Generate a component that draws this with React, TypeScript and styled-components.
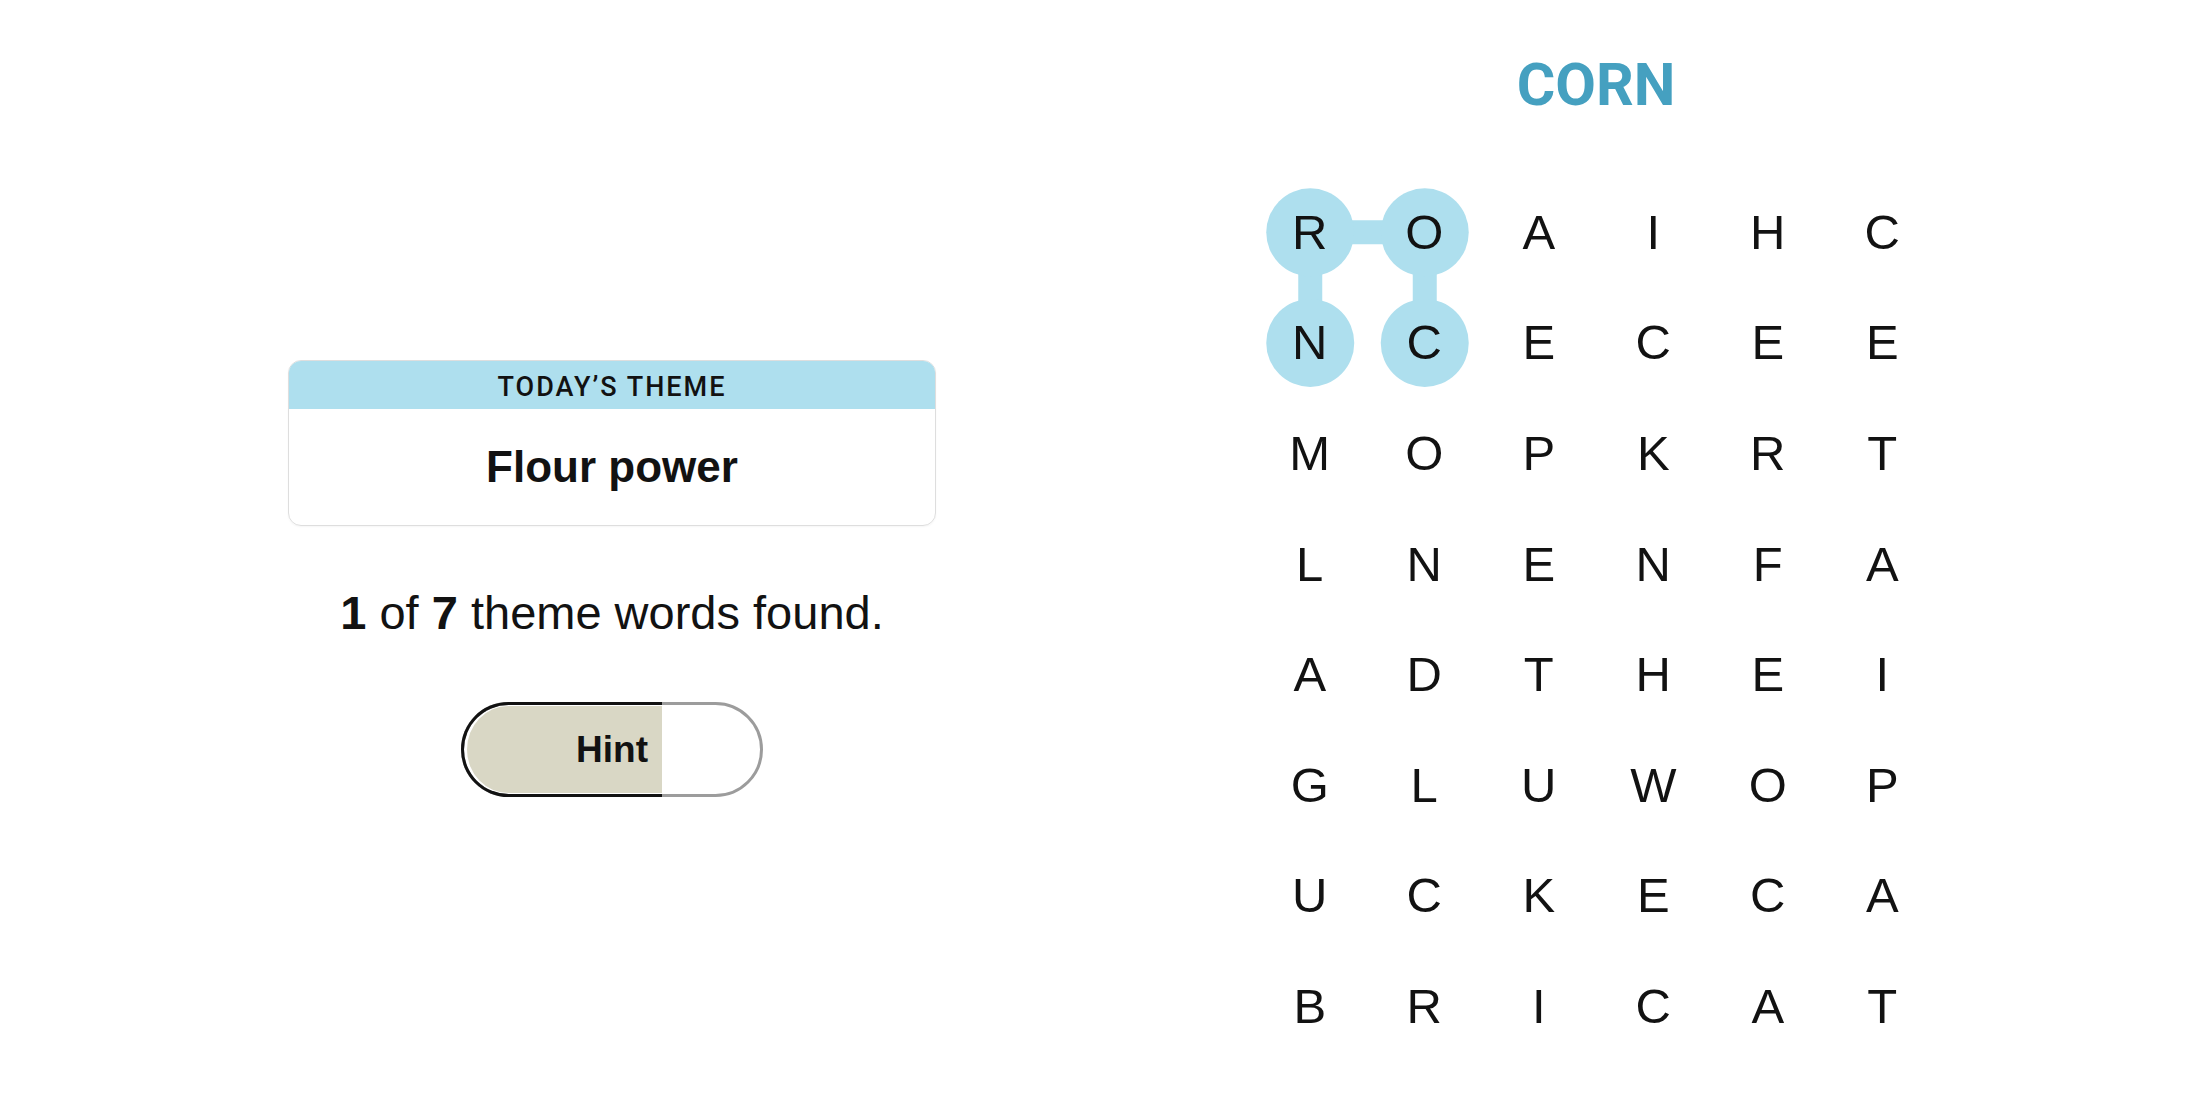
import styled, { createGlobalStyle } from "styled-components";

const GlobalStyle = createGlobalStyle`
  html, body {
    margin: 0;
    padding: 0;
    background: #ffffff;
  }
  body {
    font-family: "Liberation Sans", Arial, sans-serif;
    color: #121212;
  }
  * {
    box-sizing: border-box;
  }
`;

const CELL_W = 114.5;
const CELL_H = 110.6;
const DOT = "#aedfee";

const LETTERS = [
  "ROAIHC",
  "NCECEE",
  "MOPKRT",
  "LNENFA",
  "ADTHEI",
  "GLUWOP",
  "UCKECA",
  "BRICAT",
];

// found word path, as [row, col]
const PATH: [number, number][] = [
  [1, 1],
  [0, 1],
  [0, 0],
  [1, 0],
];

const Page = styled.main`
  display: flex;
  width: 2200px;
  height: 1100px;
  overflow: hidden;
`;

const LeftPanel = styled.section`
  width: 1224px;
  display: flex;
  flex-direction: column;
  align-items: center;
  padding-top: 360px;
`;

const RightPanel = styled.section`
  width: 744px;
  display: flex;
  flex-direction: column;
  align-items: center;
  padding-top: 55px;
`;

const ThemeCard = styled.div`
  width: 648px;
  border: 1px solid #dedede;
  border-radius: 13px;
  overflow: hidden;
  box-shadow: 0 1px 2px rgba(0, 0, 0, 0.04);
`;

const ThemeHeader = styled.div`
  height: 48px;
  display: flex;
  align-items: center;
  justify-content: center;
  background: ${DOT};
  font-family: Roboto, "Liberation Sans", sans-serif;
  font-size: 27px;
  font-weight: 500;
  line-height: 1;
  letter-spacing: 2px;
  padding-top: 4px;
`;

const ThemeBody = styled.div`
  height: 116px;
  display: flex;
  align-items: center;
  justify-content: center;
  font-size: 44px;
  font-weight: 700;
  line-height: 1;
`;

const Progress = styled.p`
  margin: 63px 0 0;
  font-size: 47px;
  line-height: 1;
  b {
    font-weight: 700;
  }
`;

const HintButton = styled.button`
  position: relative;
  margin-top: 66px;
  width: 302px;
  height: 95px;
  border: 3px solid #9c9c9c;
  border-radius: 48px;
  background: #ffffff;
  padding: 0;
  font-family: "Liberation Sans", Arial, sans-serif;
  cursor: pointer;
`;

const HintFill = styled.span<{ $ratio: number }>`
  position: absolute;
  top: -3px;
  bottom: -3px;
  left: -3px;
  width: ${(p) => p.$ratio * 302}px;
  border: 3px solid #121212;
  border-right: none;
  border-radius: 48px 0 0 48px;
  padding: 1px 0 1px 3px;
  background: #d9d7c5;
  background-clip: content-box;
`;

const HintLabel = styled.span`
  position: relative;
  z-index: 1;
  font-size: 37px;
  font-weight: 700;
  line-height: 1;
  color: #121212;
`;

const Word = styled.h2`
  margin: 0;
  height: 59px;
  font-family: Roboto, "Liberation Sans", sans-serif;
  font-size: 59px;
  font-weight: 700;
  line-height: 1;
  color: #45a0c0;
`;

const Board = styled.div`
  position: relative;
  margin-top: 63px;
  display: grid;
  grid-template-columns: repeat(6, ${CELL_W}px);
  grid-template-rows: repeat(8, ${CELL_H}px);
`;

const PathLayer = styled.svg`
  position: absolute;
  inset: 0;
  z-index: 0;
`;

const Cell = styled.div`
  position: relative;
  z-index: 1;
  display: flex;
  align-items: center;
  justify-content: center;
  font-size: 49px;
  line-height: 1;
  color: #121212;
`;

const cx = (c: number) => CELL_W / 2 + c * CELL_W;
const cy = (r: number) => CELL_H / 2 + r * CELL_H;

const App: React.FC = () => {
  return (
    <>
      <GlobalStyle />
      <Page>
        <LeftPanel>
          <ThemeCard>
            <ThemeHeader>TODAY’S THEME</ThemeHeader>
            <ThemeBody>Flour power</ThemeBody>
          </ThemeCard>
          <Progress>
            <b>1</b> of <b>7</b> theme words found.
          </Progress>
          <HintButton type="button">
            <HintFill $ratio={2 / 3} />
            <HintLabel>Hint</HintLabel>
          </HintButton>
        </LeftPanel>
        <RightPanel>
          <Word>CORN</Word>
          <Board>
            <PathLayer width={CELL_W * 6} height={CELL_H * 8}>
              {PATH.slice(1).map(([r, c], i) => (
                <line
                  key={i}
                  x1={cx(PATH[i][1])}
                  y1={cy(PATH[i][0])}
                  x2={cx(c)}
                  y2={cy(r)}
                  stroke={DOT}
                  strokeWidth={24}
                />
              ))}
              {PATH.map(([r, c]) => (
                <circle key={`${r}-${c}`} cx={cx(c)} cy={cy(r)} r={44} fill={DOT} />
              ))}
            </PathLayer>
            {LETTERS.map((row, r) =>
              row.split("").map((letter, c) => <Cell key={`${r}-${c}`}>{letter}</Cell>)
            )}
          </Board>
        </RightPanel>
      </Page>
    </>
  );
};

export default App;
